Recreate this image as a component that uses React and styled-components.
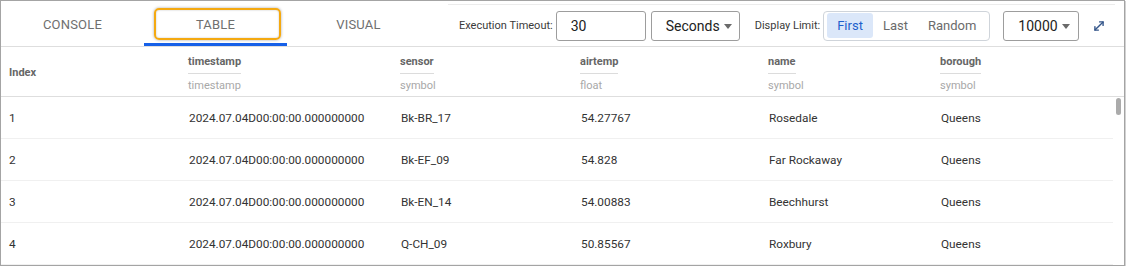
import React from "react";
import styled, { createGlobalStyle } from "styled-components";

const GlobalStyle = createGlobalStyle`
  html, body {
    margin: 0;
    padding: 0;
    background: #fff;
    font-family: Roboto, "Liberation Sans", Arial, sans-serif;
  }
`;

const Frame = styled.div`
  width: 1123px;
  height: 264px;
  border: 1px solid #a4a4a4;
  box-shadow: 1px 1px 0 #d2d2d2;
  background: #fff;
  display: flex;
  flex-direction: column;
  overflow: hidden;
`;

const TopBar = styled.div`
  display: flex;
  height: 45px;
  border-bottom: 1px solid #dedede;
  flex-shrink: 0;
`;

const Tabs = styled.div`
  display: flex;
  flex-shrink: 0;
`;

const Tab = styled.div`
  position: relative;
  width: 143px;
  height: 45px;
  display: flex;
  align-items: center;
  justify-content: center;
  padding-top: 2px;
  box-sizing: border-box;
  font-size: 13px;
  color: #6f6f6f;
  letter-spacing: 0.2px;
  box-shadow: ${(p) => (p.$active ? "inset 0 -3px 0 #1660e8" : "none")};
`;

const FocusRing = styled.div`
  position: absolute;
  left: 10px;
  right: 6px;
  top: 7px;
  height: 32px;
  box-sizing: border-box;
  border: 2px solid #f4a911;
  border-radius: 5px;
  box-shadow: 0 0 3px rgba(0, 0, 0, 0.35), inset 0 0 2px rgba(0, 0, 0, 0.25);
`;

const Toolbar = styled.div`
  flex: 1;
  display: flex;
  align-items: center;
  margin: 3px 9px 0 18px;
  padding-left: 11px;
  border-top: 1px solid #ececec;
  color: #333;
  white-space: nowrap;
  & > * {
    flex-shrink: 0;
  }
`;

const Label = styled.span`
  font-size: 11px;
  color: #3a3a3a;
  margin-right: ${(p) => p.$gap || 4}px;
  margin-left: ${(p) => p.$left || 0}px;
`;

const Box = styled.div`
  width: ${(p) => p.$w}px;
  height: 30px;
  box-sizing: border-box;
  border: 1px solid #9d9d9d;
  border-radius: 3px;
  display: flex;
  align-items: center;
  padding-left: ${(p) => p.$pad || 14}px;
  margin-left: ${(p) => p.$left || 0}px;
  font-size: 14px;
  color: #222;
`;

const Caret = styled.span`
  width: 0;
  height: 0;
  margin-left: 4px;
  margin-top: 1px;
  border-left: 4px solid transparent;
  border-right: 4px solid transparent;
  border-top: 5px solid #6a6a6a;
`;

const Group = styled.div`
  display: flex;
  align-items: center;
  height: 30px;
  box-sizing: border-box;
  border: 1px solid #cfd4da;
  border-radius: 4px;
  padding: 0 3px;
`;

const GroupButton = styled.div`
  height: 25px;
  display: flex;
  align-items: center;
  padding: 0 10px;
  border-radius: 3px;
  font-size: 13px;
  background: ${(p) => (p.$active ? "#dbe7f9" : "transparent")};
  color: ${(p) => (p.$active ? "#1d5fcc" : "#6b6b6b")};
`;

const IconButton = styled.div`
  margin-left: 13px;
  width: 14px;
  height: 14px;
  display: flex;
  color: #34568a;
`;

const Table = styled.div`
  flex: 1;
  display: flex;
  flex-direction: column;
  min-height: 0;
`;

const Cols = "179px 212px 180px 188px 172px 1fr";

const HeaderRow = styled.div`
  display: grid;
  grid-template-columns: ${Cols};
  height: 50px;
  box-sizing: border-box;
  padding-top: 3px;
  border-bottom: 1px solid #dedede;
  flex-shrink: 0;
  padding-right: 11px;
`;

const HeadCell = styled.div`
  padding-left: 8px;
  display: flex;
  flex-direction: column;
  justify-content: center;
  align-items: flex-start;
`;

const HeadName = styled.div`
  font-size: 11px;
  font-weight: 700;
  color: #666;
  padding-bottom: ${(p) => (p.$plain ? 0 : 5)}px;
  border-bottom: ${(p) => (p.$plain ? "none" : "1px solid #dcdcdc")};
  margin-top: ${(p) => (p.$plain ? -2 : 0)}px;
`;

const HeadType = styled.div`
  font-size: 11px;
  color: #a8a8a8;
  margin-top: 5px;
`;

const BodyWrap = styled.div`
  flex: 1;
  display: flex;
  min-height: 0;
  overflow: hidden;
`;

const Rows = styled.div`
  flex: 1;
`;

const Row = styled.div`
  display: grid;
  grid-template-columns: ${Cols};
  height: 42px;
  border-bottom: 1px solid #f0f0f0;
  box-sizing: border-box;
  align-items: center;
  font-size: 11.8px;
  color: #333;
`;

const Cell = styled.div`
  padding-left: ${(p) => (p.$first ? 8 : 9)}px;
  padding-top: 1px;
`;

const Track = styled.div`
  width: 11px;
  flex-shrink: 0;
  padding-top: 1px;
  display: flex;
  justify-content: center;
`;

const Thumb = styled.div`
  width: 5px;
  height: 17px;
  border-radius: 3px;
  background: #ababab;
  margin-right: 1px;
`;

const columns = [
  { name: "timestamp", type: "timestamp" },
  { name: "sensor", type: "symbol" },
  { name: "airtemp", type: "float" },
  { name: "name", type: "symbol" },
  { name: "borough", type: "symbol" },
];

const data = [
  ["1", "2024.07.04D00:00:00.000000000", "Bk-BR_17", "54.27767", "Rosedale", "Queens"],
  ["2", "2024.07.04D00:00:00.000000000", "Bk-EF_09", "54.828", "Far Rockaway", "Queens"],
  ["3", "2024.07.04D00:00:00.000000000", "Bk-EN_14", "54.00883", "Beechhurst", "Queens"],
  ["4", "2024.07.04D00:00:00.000000000", "Q-CH_09", "50.85567", "Roxbury", "Queens"],
];

const ExpandIcon = () => (
  <svg width="14" height="14" viewBox="0 0 24 24" fill="none" stroke="currentColor" strokeWidth="2.4" strokeLinecap="round" strokeLinejoin="round">
    <polyline points="13 5 19 5 19 11" />
    <polyline points="11 19 5 19 5 13" />
    <line x1="19" y1="5" x2="5" y2="19" />
  </svg>
);

export default function App() {
  return (
    <>
      <GlobalStyle />
      <Frame>
        <TopBar>
          <Tabs>
            <Tab>CONSOLE</Tab>
            <Tab $active>
              TABLE
              <FocusRing />
            </Tab>
            <Tab>VISUAL</Tab>
          </Tabs>
          <Toolbar>
            <Label $gap={3}>Execution Timeout:</Label>
            <Box $w={90}>30</Box>
            <Box $w={89} $left={5} $pad={14}>
              Seconds
              <Caret />
            </Box>
            <Label $left={15} $gap={3}>Display Limit:</Label>
            <Group>
              <GroupButton $active>First</GroupButton>
              <GroupButton>Last</GroupButton>
              <GroupButton>Random</GroupButton>
            </Group>
            <Box $w={76} $left={13} $pad={14}>
              10000
              <Caret />
            </Box>
            <IconButton>
              <ExpandIcon />
            </IconButton>
          </Toolbar>
        </TopBar>
        <Table>
          <HeaderRow>
            <HeadCell>
              <HeadName $plain>Index</HeadName>
            </HeadCell>
            {columns.map((c) => (
              <HeadCell key={c.name}>
                <HeadName>{c.name}</HeadName>
                <HeadType>{c.type}</HeadType>
              </HeadCell>
            ))}
          </HeaderRow>
          <BodyWrap>
            <Rows>
              {data.map((r) => (
                <Row key={r[0]}>
                  {r.map((v, i) => (
                    <Cell key={i} $first={i === 0}>
                      {v}
                    </Cell>
                  ))}
                </Row>
              ))}
            </Rows>
            <Track>
              <Thumb />
            </Track>
          </BodyWrap>
        </Table>
      </Frame>
    </>
  );
}
